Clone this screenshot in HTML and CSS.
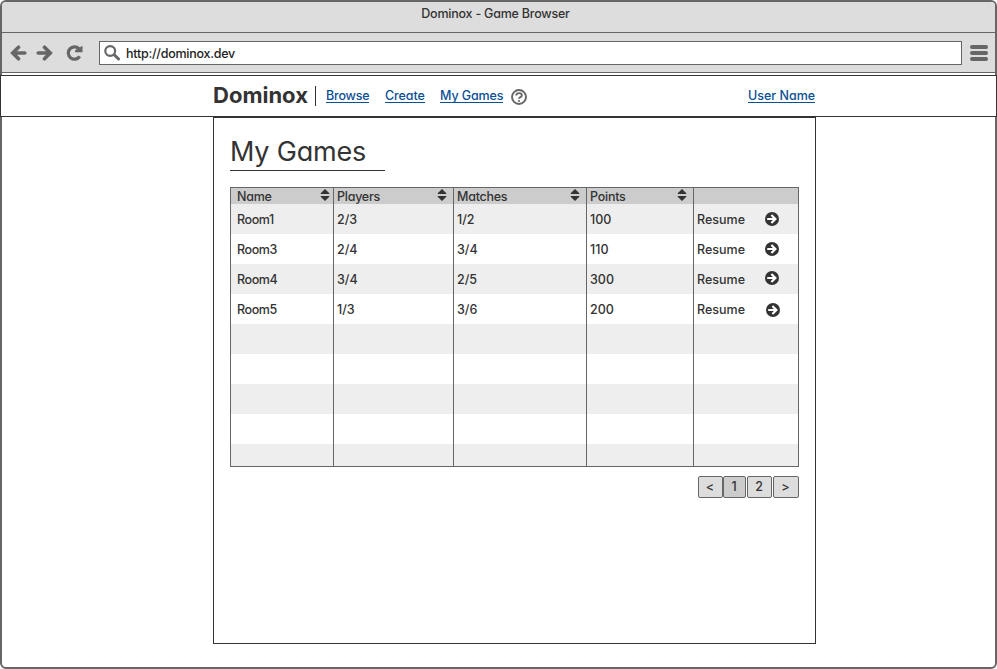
FILE: index.html
```html
<!DOCTYPE html>
<html lang="en">
<head>
<meta charset="utf-8">
<title>Dominox - Game Browser</title>
<link rel="stylesheet" href="styles.css">
</head>
<body>
<svg class="defs" aria-hidden="true">
  <symbol id="sort" viewBox="0 0 10 12"><path d="M5 0 9.3 4.2V5H.7V4.2ZM.7 7H9.3V7.8L5 12 .7 7.8Z"/></symbol>
  <symbol id="go" viewBox="0 0 14 14"><circle cx="7" cy="7" r="7"/><path class="cut" d="M2.2 7h7M6.4 3 10.4 7l-4 4"/></symbol>
  <symbol id="arrow" viewBox="0 0 16 16"><path class="line" d="M14.3 8H3M8 2.2 2.2 8 8 13.8"/></symbol>
</svg>
<div class="window">
  <div class="titlebar"><span>Dominox - Game Browser</span></div>
  <div class="toolbar">
    <svg class="nav"><use href="#arrow"/></svg>
    <svg class="nav forward"><use href="#arrow"/></svg>
    <svg class="reload" viewBox="0 0 16 16"><path class="line" d="M13.2 11.4A6.2 6.2 0 1 1 12.4 3.6"/><path d="M16 .8V7.2H8.6V5.2Z"/></svg>
    <div class="address">
      <svg class="search" viewBox="0 0 16 16"><circle class="lens" cx="6.2" cy="6" r="4.9"/><path class="line" d="m10.5 10 4 4"/></svg>
      <span>http://dominox.dev</span>
    </div>
    <div class="menu"><i></i><i></i><i></i></div>
  </div>
  <header class="header">
    <div class="header-inner">
      <strong class="brand">Dominox</strong>
      <i class="divider"></i>
      <a class="browse">Browse</a><a class="create">Create</a><a class="games">My Games</a>
      <svg class="help" viewBox="0 0 16 16"><circle class="ring" cx="8" cy="8" r="7"/><path class="ring" d="M5.2 6.5C5.2 3.2 10.8 3.4 10.8 6.4 10.8 8.3 8 8 8 9.8"/><circle cx="8" cy="12" r="1.1"/></svg>
      <a class="user">User Name</a>
    </div>
  </header>
  <main class="panel">
    <h1><span>My Games</span></h1>
    <div class="table">
      <div class="row head"><div><span>Name</span><svg><use href="#sort"/></svg></div><div><span>Players</span><svg><use href="#sort"/></svg></div><div><span>Matches</span><svg><use href="#sort"/></svg></div><div><span>Points</span><svg><use href="#sort"/></svg></div><div></div></div>
      <div class="row"><div><span class="room">Room1</span></div><div>2/3</div><div>1/2</div><div>100</div><div><span class="resume">Resume</span><svg class="go"><use href="#go"/></svg></div></div>
      <div class="row"><div><span class="room">Room3</span></div><div>2/4</div><div>3/4</div><div>110</div><div><span class="resume">Resume</span><svg class="go"><use href="#go"/></svg></div></div>
      <div class="row"><div><span class="room">Room4</span></div><div>3/4</div><div>2/5</div><div>300</div><div><span class="resume">Resume</span><svg class="go raised"><use href="#go"/></svg></div></div>
      <div class="row"><div><span class="room">Room5</span></div><div>1/3</div><div>3/6</div><div>200</div><div><span class="resume">Resume</span><svg class="go shifted"><use href="#go"/></svg></div></div>
      <div class="row"><div></div><div></div><div></div><div></div><div></div></div>
      <div class="row"><div></div><div></div><div></div><div></div><div></div></div>
      <div class="row"><div></div><div></div><div></div><div></div><div></div></div>
      <div class="row"><div></div><div></div><div></div><div></div><div></div></div>
      <div class="row"><div></div><div></div><div></div><div></div><div></div></div>
    </div>
    <nav class="pager"><button>&lt;</button><button class="current">1</button><button>2</button><button>&gt;</button></nav>
  </main>
</div>
</body>
</html>
```
FILE: styles.css
```css
* { box-sizing: border-box; }
body { margin: 0; background: #fff; color: #333; font: 500 12.5px/16px Inter, "Open Sans", sans-serif; font-feature-settings: "cv11"; }
svg { display: block; flex: none; fill: currentColor; }
.defs { position: absolute; width: 0; height: 0; }
.line { fill: none; stroke: currentColor; stroke-width: 3.6; stroke-linecap: round; }
.window { width: 997px; height: 669px; border: 2px solid #666; border-radius: 6px; }
.titlebar { height: 31px; border-bottom: 1px solid #666; background: #ddd; border-radius: 4px 4px 0 0; text-align: center; padding-top: 4px; letter-spacing: -.22px; padding-right: 6px; }
.toolbar { height: 40px; border-bottom: 1px solid #666; background: #ddd; display: flex; align-items: center; color: #666; padding-left: 8px; }
.nav { width: 17px; height: 16px; }
.forward { transform: scaleX(-1); margin-left: 9px; }
.reload { width: 17px; height: 16px; margin-left: 13px; }
.reload .line { stroke-width: 3.2; stroke-linecap: butt; }
.address { width: 863px; height: 24px; border: 1px solid #666; background: #fff; margin-left: 16px; display: flex; align-items: center; padding-left: 4px; }
.address span { margin: 2px 0 0 6px; color: #222; letter-spacing: -.25px; }
.search { width: 16px; height: 16px; color: #666; }
.lens { fill: none; stroke: currentColor; stroke-width: 2.2; }
.search .line { stroke-width: 3; }
.menu { display: grid; gap: 2px; margin-left: 8px; }
.menu i { width: 18px; height: 4px; border-radius: 2px; background: #666; }
.header { position: relative; width: 997px; height: 42px; margin: 2px 0 0 -2px; border: 1px solid #333; background: #fff; }
.header-inner { display: flex; align-items: center; height: 40px; margin-left: 212px; width: 603px; }
.brand { font-size: 22px; line-height: 26px; font-weight: 700; width: 102px; margin-top: -2px; }
.divider { width: 1px; height: 20px; background: #333; margin-right: 10px; }
.header a { color: #0b4f95; border-bottom: 1px solid #0b4f95; line-height: 15px; height: 15px; white-space: nowrap; letter-spacing: -.1px; margin: 0 16px 1px 0; }
.header .browse { width: 43px; letter-spacing: -.2px; }
.header .create { width: 40px; margin-right: 15px; }
.header .games { width: 63px; margin-right: 8px; }
.header .user { width: 67px; margin: 0 1px 1px auto; letter-spacing: 0; }
.help { width: 16px; height: 16px; color: #666; margin-top: 2px; }
.ring { fill: none; stroke: currentColor; stroke-width: 1.9; }
.panel { width: 603px; height: 527px; border: 1px solid #333; margin-left: 211px; padding: 0 16px; }
h1 { margin: 0; width: 155px; height: 53px; border-bottom: 1px solid #333; font-size: 27px; line-height: 34px; font-weight: 400; padding-top: 17px; white-space: nowrap; letter-spacing: -.2px; }
.table { width: 569px; height: 280px; margin-top: 16px; border: 1px solid #666; overflow: hidden; }
.row { display: grid; grid-template-columns: 103px 120px 133px 107px 104px; height: 30px; }
.row:nth-child(even) { background: #eee; }
.row div { border-right: 1px solid #666; padding: 2px 0 0 3px; display: flex; align-items: center; }
.row div:first-child { padding-left: 6px; }
.row div:last-child { border: 0; }
.row.head { height: 16px; line-height: 14px; background: #ccc; letter-spacing: -.25px; }
.head svg { width: 10px; height: 12px; margin: -1px 6px 3px auto; }
.head div:first-child svg { margin-right: 3px; }
.room { letter-spacing: -.4px; }
.resume { width: 68px; }
.go { width: 14px; height: 14px; margin-bottom: 2px; }
.cut { fill: none; stroke: #fff; stroke-width: 2.2; }
.raised { margin-bottom: 4px; }
.shifted { margin: 0 0 0 1px; }
.pager { display: flex; margin-top: 9px; }
button { font: inherit; color: #333; width: 25px; height: 22px; padding: 0 1px 1px 0; border: 1px solid #666; border-radius: 2px; background: #ddd; }
.pager button:first-child { margin-left: auto; }
.pager .current { width: 23px; background: #ccc; margin-right: 1px; }
.pager button:last-child { width: 26px; margin-left: 1px; }
```
